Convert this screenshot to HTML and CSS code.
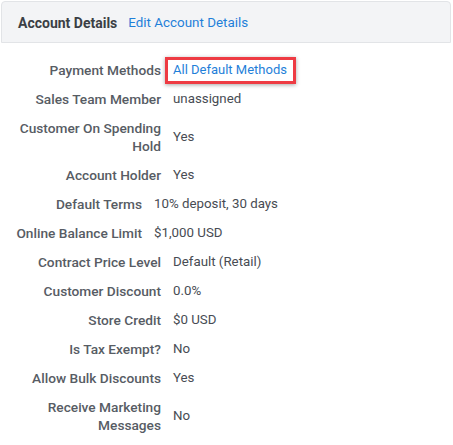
FILE: index.html
```html
<!DOCTYPE html>
<html>
<head>
<meta charset="utf-8">
<link rel="stylesheet" href="styles.css">
</head>
<body>
<div class="panel">
  <div class="panel-header">
    <span class="panel-title">Account Details</span>
    <a class="link" href="#">Edit Account Details</a>
  </div>
  <div class="details">
    <div class="row"><div class="label">Payment Methods</div><div class="value"><a class="link highlight" href="#">All Default Methods</a></div></div>
    <div class="row"><div class="label">Sales Team Member</div><div class="value">unassigned</div></div>
    <div class="row"><div class="label">Customer On Spending Hold</div><div class="value">Yes</div></div>
    <div class="row"><div class="label">Account Holder</div><div class="value">Yes</div></div>
    <div class="row row-narrow"><div class="label">Default Terms</div><div class="value">10% deposit, 30 days</div></div>
    <div class="row row-narrow"><div class="label">Online Balance Limit</div><div class="value">$1,000 USD</div></div>
    <div class="row"><div class="label">Contract Price Level</div><div class="value">Default (Retail)</div></div>
    <div class="row"><div class="label">Customer Discount</div><div class="value">0.0%</div></div>
    <div class="row"><div class="label">Store Credit</div><div class="value">$0 USD</div></div>
    <div class="row"><div class="label">Is Tax Exempt?</div><div class="value">No</div></div>
    <div class="row"><div class="label">Allow Bulk Discounts</div><div class="value">Yes</div></div>
    <div class="row"><div class="label">Receive Marketing Messages</div><div class="value">No</div></div>
  </div>
</div>
</body>
</html>
```
FILE: styles.css
```css
html, body {
  margin: 0;
  padding: 0;
  background: #ffffff;
}
body {
  font-family: Roboto, "Liberation Sans", Arial, sans-serif;
  font-size: 13px;
  color: #4a4f57;
}
.panel {
  padding: 1px 2px 0 1px;
}
.panel-header {
  height: 42px;
  box-sizing: border-box;
  background: #f3f4f6;
  border: 1px solid #e2e4e7;
  border-radius: 4px 4px 0 0;
  display: flex;
  align-items: center;
  gap: 11px;
  padding: 1px 0 0 16px;
}
.panel-title {
  font-size: 14px;
  font-weight: 700;
  color: #3b3f45;
}
.panel-header .link {
  font-size: 13.4px;
}
.link {
  color: #1f7fd9;
  text-decoration: none;
}
.details {
  display: flex;
  flex-direction: column;
  gap: 11px;
  padding: 18px 0 0 0;
}
.row {
  display: grid;
  grid-template-columns: 146px auto;
  column-gap: 12px;
  align-items: center;
  line-height: 18px;
  padding-left: 14px;
}
.row-narrow {
  grid-template-columns: 127px auto;
}
.row-narrow .label {
  white-space: nowrap;
}
.label {
  text-align: right;
  color: #575c64;
  font-weight: 500;
  font-size: 13.7px;
}
.value {
  color: #474c53;
  font-size: 13.3px;
}
.highlight {
  position: relative;
  display: inline-block;
  font-size: 13px;
}
.highlight::after {
  content: "";
  position: absolute;
  top: -4px;
  bottom: -5px;
  left: -8px;
  right: -9px;
  border: 3px solid #ee3b43;
  box-shadow: 0 1px 4px rgba(0, 0, 0, 0.35);
}
```
